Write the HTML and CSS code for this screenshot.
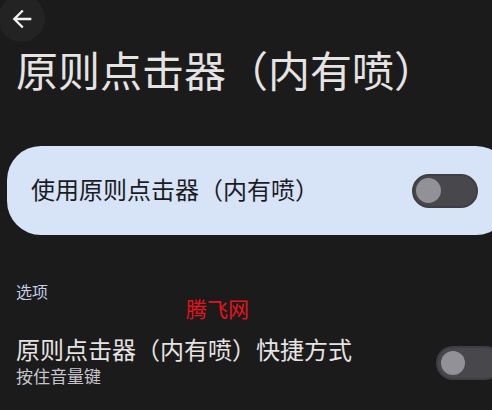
FILE: index.html
```html
<!DOCTYPE html>
<html lang="zh-CN">
<head>
  <meta charset="UTF-8">
  <meta name="viewport" content="width=device-width, initial-scale=1.0">
  <title>原则点击器（内有喷）</title>
  <link rel="stylesheet" href="styles.css">
</head>
<body>
  <div class="page">
    <div class="top-bar">
      <button class="back-btn" aria-label="返回">
        <svg viewBox="0 0 24 24" width="28" height="28">
          <path d="M20 11H7.83l5.59-5.59L12 4l-8 8 8 8 1.41-1.41L7.83 13H20v-2z" fill="#f2f2f2"/>
        </svg>
      </button>
    </div>
    <h1 class="page-title">原则点击器（内有喷）</h1>

    <div class="main-switch">
      <span class="main-switch-label">使用原则点击器（内有喷）</span>
      <span class="toggle"><span class="toggle-thumb"></span></span>
    </div>

    <div class="section-label">选项</div>

    <div class="pref-item">
      <div class="pref-text">
        <div class="pref-title">原则点击器（内有喷）快捷方式</div>
        <div class="pref-summary">按住音量键</div>
      </div>
      <span class="toggle small"><span class="toggle-thumb"></span></span>
    </div>

    <div class="watermark">腾飞网</div>
  </div>
</body>
</html>
```

FILE: styles.css
```css
html, body {
  margin: 0;
  padding: 0;
  background-color: #1b1b1b;
  overflow: hidden;
}
body {
  font-family: Roboto, "Noto Sans CJK SC", sans-serif;
  color: #e5e2e1;
}
.page {
  position: relative;
  width: 517px;
  height: 410px;
}
.top-bar {
  height: 42px;
}
.back-btn {
  display: flex;
  align-items: center;
  justify-content: center;
  width: 47px;
  height: 47px;
  margin: -5px 0 0 -2px;
  padding: 0;
  border: none;
  border-radius: 50%;
  background-color: #232323;
}
.page-title {
  margin: 11px 0 0 16px;
  font-size: 42px;
  font-weight: 400;
  line-height: 50px;
  color: #e6e3e3;
  white-space: nowrap;
}
.main-switch {
  display: flex;
  align-items: center;
  justify-content: space-between;
  height: 89px;
  margin: 48px 0 0 7px;
  padding: 0 32px 0 24px;
  box-sizing: border-box;
  width: 503px;
  border-radius: 34px;
  background-color: #d7e3f7;
}
.main-switch-label {
  font-size: 24px;
  line-height: 30px;
  color: #1b1c1f;
  white-space: nowrap;
}
.toggle {
  position: relative;
  display: flex;
  align-items: center;
  flex-shrink: 0;
  width: 66px;
  height: 34px;
  box-sizing: border-box;
  border: 2px solid #3f3f43;
  border-radius: 17px;
  background-color: #47474c;
}
.toggle-thumb {
  width: 25px;
  height: 25px;
  margin-left: 2px;
  border-radius: 50%;
  background-color: #939198;
}
.toggle.small .toggle-thumb {
  width: 24px;
  height: 24px;
  margin-left: 3px;
}
.section-label {
  margin: 48px 0 0 16px;
  font-size: 16px;
  line-height: 20px;
  color: #c3cee4;
}
.pref-item {
  display: flex;
  align-items: center;
  margin-top: 34px;
  padding: 0 15px 0 16px;
}
.pref-text {
  flex: 1;
}
.pref-title {
  font-size: 24px;
  line-height: 28px;
  color: #e6e3e3;
  white-space: nowrap;
}
.pref-summary {
  margin-top: 1px;
  font-size: 17px;
  line-height: 22px;
  color: #c5c6cc;
}
.watermark {
  position: absolute;
  left: 186px;
  top: 301px;
  font-family: "Noto Sans CJK SC", serif;
  font-size: 21px;
  line-height: 24px;
  color: #e3141d;
}
```
